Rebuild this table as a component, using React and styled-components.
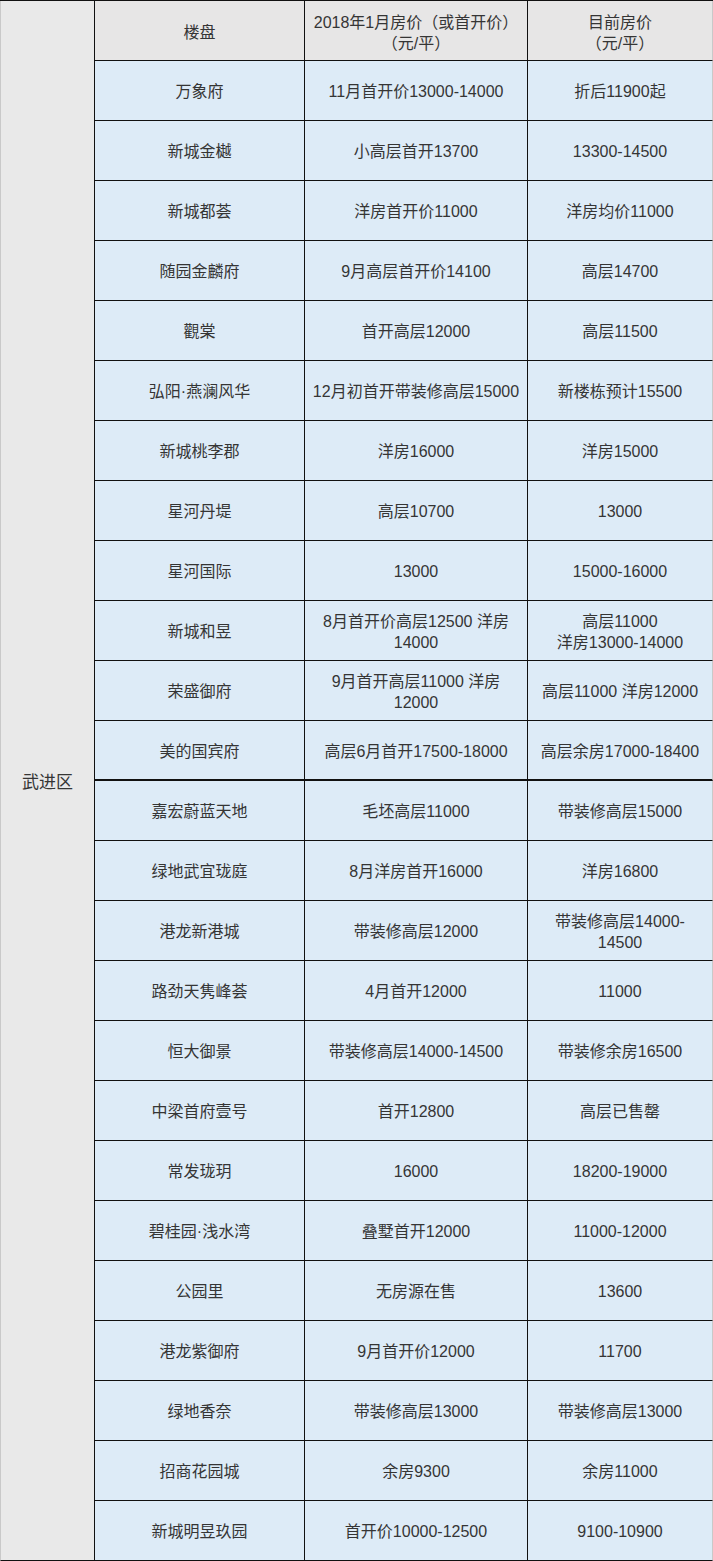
import React from "react";
import styled, { createGlobalStyle } from "styled-components";

const Global = createGlobalStyle`
  html, body { margin: 0; padding: 0; background: #ffffff; }
  * { box-sizing: border-box; }
`;

const Table = styled.div`
  display: grid;
  grid-template-columns: 95px 210px 223px 185px;
  grid-auto-rows: 60px;
  width: 713px;
  border-top: 1px solid #111;
  font-family: "Liberation Sans", "Noto Sans CJK SC", sans-serif;
  font-size: 16px;
  color: #353535;
`;

const District = styled.div`
  grid-column: 1;
  grid-row: 1 / span 26;
  background: #e9e9e9;
  border-left: 1px solid #c9c9c9;
  border-right: 1px solid #111;
  border-bottom: 1px solid #111;
  display: flex;
  align-items: center;
  justify-content: center;
  font-size: 17px;
`;

const Cell = styled.div`
  display: flex;
  align-items: center;
  justify-content: center;
  text-align: center;
  line-height: 21px;
  white-space: nowrap;
  background: ${(p) => (p.$head ? "#e7e6e6" : "#ddebf7")};
  border-right: 1px solid ${(p) => (p.$last ? "#c9c9c9" : "#111")};
  border-bottom: ${(p) => (p.$thick ? "2px" : "1px")} solid #111;
  padding-top: ${(p) => (p.$head ? "4px" : "2px")};
`;

const rows = [
  ["万象府", "11月首开价13000-14000", "折后11900起"],
  ["新城金樾", "小高层首开13700", "13300-14500"],
  ["新城都荟", "洋房首开价11000", "洋房均价11000"],
  ["随园金麟府", "9月高层首开价14100", "高层14700"],
  ["觀棠", "首开高层12000", "高层11500"],
  ["弘阳·燕澜风华", "12月初首开带装修高层15000", "新楼栋预计15500"],
  ["新城桃李郡", "洋房16000", "洋房15000"],
  ["星河丹堤", "高层10700", "13000"],
  ["星河国际", "13000", "15000-16000"],
  ["新城和昱", ["8月首开价高层12500 洋房", "14000"], ["高层11000", "洋房13000-14000"]],
  ["荣盛御府", ["9月首开高层11000 洋房", "12000"], "高层11000 洋房12000"],
  ["美的国宾府", "高层6月首开17500-18000", "高层余房17000-18400", true],
  ["嘉宏蔚蓝天地", "毛坯高层11000", "带装修高层15000"],
  ["绿地武宜珑庭", "8月洋房首开16000", "洋房16800"],
  ["港龙新港城", "带装修高层12000", ["带装修高层14000-", "14500"]],
  ["路劲天隽峰荟", "4月首开12000", "11000"],
  ["恒大御景", "带装修高层14000-14500", "带装修余房16500"],
  ["中梁首府壹号", "首开12800", "高层已售罄"],
  ["常发珑玥", "16000", "18200-19000"],
  ["碧桂园·浅水湾", "叠墅首开12000", "11000-12000"],
  ["公园里", "无房源在售", "13600"],
  ["港龙紫御府", "9月首开价12000", "11700"],
  ["绿地香奈", "带装修高层13000", "带装修高层13000"],
  ["招商花园城", "余房9300", "余房11000"],
  ["新城明昱玖园", "首开价10000-12500", "9100-10900"],
];

const Text = ({ v }) =>
  Array.isArray(v) ? (
    <span>
      {v.map((line, i) => (
        <React.Fragment key={i}>
          {i > 0 && <br />}
          {line}
        </React.Fragment>
      ))}
    </span>
  ) : (
    <span>{v}</span>
  );

export default function App() {
  return (
    <>
      <Global />
      <Table>
        <District>武进区</District>
        <Cell $head>楼盘</Cell>
        <Cell $head>
          <Text v={["2018年1月房价（或首开价）", "（元/平）"]} />
        </Cell>
        <Cell $head $last>
          <Text v={["目前房价", "（元/平）"]} />
        </Cell>
        {rows.map(([name, a, b, thick], i) => (
          <React.Fragment key={i}>
            <Cell $thick={thick}>
              <Text v={name} />
            </Cell>
            <Cell $thick={thick}>
              <Text v={a} />
            </Cell>
            <Cell $thick={thick} $last>
              <Text v={b} />
            </Cell>
          </React.Fragment>
        ))}
      </Table>
    </>
  );
}
